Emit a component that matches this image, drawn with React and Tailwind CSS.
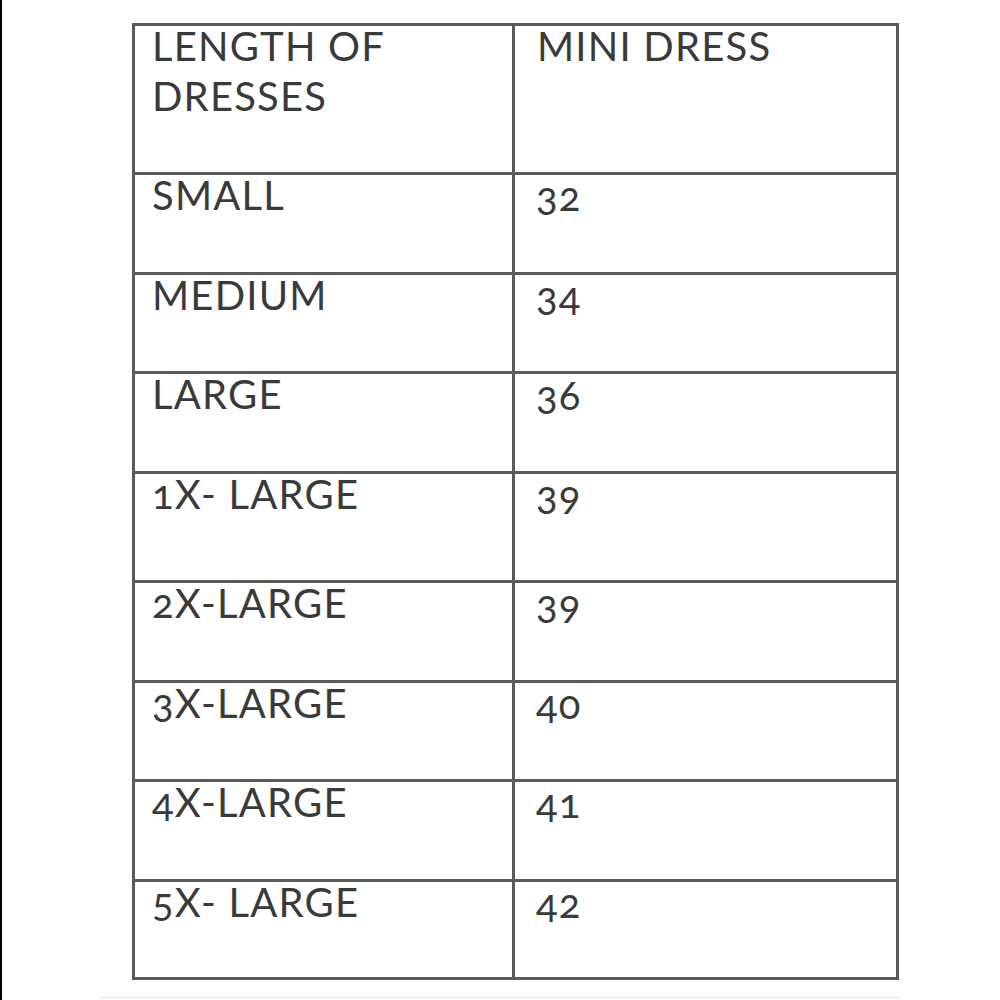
export default function App() {
  const rows = [
    { a: "SMALL", b: "32", h: "h-[100px]" },
    { a: "MEDIUM", b: "34", h: "h-[99px]" },
    { a: "LARGE", b: "36", h: "h-[100px]" },
    { a: "1X- LARGE", b: "39", h: "h-[109px]" },
    { a: "2X-LARGE", b: "39", h: "h-[100px]" },
    { a: "3X-LARGE", b: "40", h: "h-[99px]" },
    { a: "4X-LARGE", b: "41", h: "h-[100px]" },
    { a: "5X- LARGE", b: "42", h: "h-[98px]" },
  ];
  return (
    <div
      className="w-[1000px] h-[1000px] bg-white border-l-[2px] border-black overflow-hidden text-[#3a3a3a] oldstyle-nums"
      style={{ fontFamily: "Lato, 'Noto Sans', sans-serif" }}
    >
      <div className="ml-[130px] mt-[23px] w-[767px] border-t-[3px] border-x-[3px] border-[#5a5a5a] flex flex-col">
        <div className="flex h-[149px] border-b-[3px] border-[#5a5a5a]">
          <div className="w-[380px] border-r-[3px] border-[#5a5a5a] pl-[17px] text-[40px] tracking-[1.2px] leading-[50px]">
            <div className="-mt-[5px]">
              LENGTH OF
              <br />
              DRESSES
            </div>
          </div>
          <div className="flex-1 pl-[22px] text-[40px] tracking-[1.2px] leading-[50px]">
            <div className="-mt-[5px]">MINI DRESS</div>
          </div>
        </div>
        {rows.map((r, i) => (
          <div key={i} className={`flex ${r.h} border-b-[3px] border-[#5a5a5a]`}>
            <div className="w-[380px] border-r-[3px] border-[#5a5a5a] pl-[17px] text-[40px] tracking-[1.2px] leading-[40px]">
              {r.a}
            </div>
            <div className="flex-1 pl-[21px] pt-[1px] text-[40px] tracking-[1.2px] leading-[40px]">{r.b}</div>
          </div>
        ))}
      </div>
      <div className="ml-[98px] mt-[17px] w-[800px] h-[1px] bg-[#e2e2e2]" />
    </div>
  );
}
